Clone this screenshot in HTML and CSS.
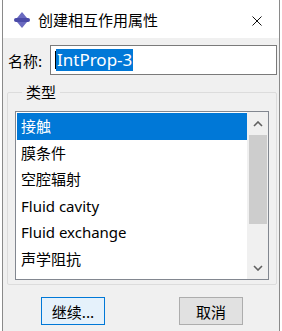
FILE: index.html
```html
<!DOCTYPE html>
<html lang="zh-CN">
<head>
  <meta charset="UTF-8">
  <meta name="viewport" content="width=device-width, initial-scale=1.0">
  <title>创建相互作用属性</title>
  <link rel="stylesheet" href="styles.css">
</head>
<body>
  <div class="ventana">
    <!-- Barra de titulo -->
    <div class="titulo">
      <svg class="icono" width="18" height="18" viewBox="0 0 18 18">
        <polygon points="9,1 14,7 4,7" fill="#6a6ac0"/>
        <rect x="1" y="7" width="16" height="4" rx="2" fill="#4a4aa8"/>
        <polygon points="4,11 14,11 9,17" fill="#6a6ac0"/>
      </svg>
      <span class="titulo-texto">创建相互作用属性</span>
      <svg class="cerrar" width="10" height="10" viewBox="0 0 10 10">
        <path d="M0.5 0.5 L9.5 9.5 M9.5 0.5 L0.5 9.5" stroke="#111" stroke-width="1" fill="none"/>
      </svg>
    </div>

    <div class="contenido">
      <div class="fila-nombre">
        <label class="etiqueta">名称:</label>
        <div class="campo">
          <span class="cursor"></span>
          <span class="seleccion">IntProp-3</span>
        </div>
      </div>

      <fieldset class="grupo">
        <legend>类型</legend>
        <div class="lista">
          <ul class="items">
            <li class="activo">接触</li>
            <li>膜条件</li>
            <li>空腔辐射</li>
            <li>Fluid cavity</li>
            <li>Fluid exchange</li>
            <li>声学阻抗</li>
          </ul>
          <div class="barra">
            <svg class="flecha" width="10" height="6" viewBox="0 0 10 6">
              <path d="M1 5 L5 1 L9 5" stroke="#606060" stroke-width="1.6" fill="none"/>
            </svg>
            <div class="pulgar"></div>
            <div class="resto"></div>
            <svg class="flecha" width="10" height="6" viewBox="0 0 10 6">
              <path d="M1 1 L5 5 L9 1" stroke="#606060" stroke-width="1.6" fill="none"/>
            </svg>
          </div>
        </div>
      </fieldset>

      <div class="botones">
        <button class="boton principal">继续...</button>
        <button class="boton">取消</button>
      </div>
    </div>
  </div>
</body>
</html>
```

FILE: styles.css
```css
body {
  margin: 0;
  padding: 0;
  background-color: #ffffff;
  font-family: "Segoe UI", "Noto Sans", "Noto Sans CJK SC", sans-serif;
  color: #000;
}

.ventana {
  margin-left: 2px;
  width: 276px;
  height: 331px;
  border-left: 1px solid #8a8a8a;
  border-right: 1px solid #8a8a8a;
  display: flex;
  flex-direction: column;
  background-color: #f0f0f0;
}

.titulo {
  height: 38px;
  background-color: #ffffff;
  display: flex;
  align-items: center;
  padding-left: 10px;
}

.icono {
  margin-top: 1px;
}

.titulo-texto {
  margin-left: 7px;
  font-size: 15px;
  font-family: "Noto Sans CJK SC", sans-serif;
}

.cerrar {
  margin-left: auto;
  margin-right: 17px;
  margin-top: 4px;
}

.contenido {
  flex: 1;
  display: flex;
  flex-direction: column;
}

.fila-nombre {
  display: flex;
  align-items: center;
  margin-top: 7px;
  padding-left: 5px;
  padding-right: 2px;
}

.etiqueta {
  font-size: 15px;
  font-family: "Noto Sans CJK SC", sans-serif;
  width: 42px;
}

.campo {
  flex: 1;
  height: 28px;
  border: 1px solid #7a7a7a;
  background-color: #ffffff;
  display: flex;
  align-items: center;
  padding-left: 4px;
}

.cursor {
  width: 1px;
  height: 18px;
  background-color: #000;
}

.seleccion {
  background-color: #0078d7;
  color: #ffffff;
  font-size: 17px;
  line-height: 22px;
  padding: 0 1px;
}

.grupo {
  margin: 8px 2px 0 4px;
  padding: 10px 7px 4px 7px;
  border: 1px solid #dcdcdc;
  border-radius: 2px;
}

.grupo legend {
  font-size: 15px;
  font-family: "Noto Sans CJK SC", sans-serif;
  padding: 0 4px;
  margin-left: 7px;
  line-height: 18px;
}

.lista {
  display: grid;
  grid-template-columns: 1fr 21px;
  border: 1px solid #828790;
  background-color: #ffffff;
  height: 169px;
  box-sizing: border-box;
}

.items {
  list-style: none;
  margin: 0;
  padding: 1px 0 0 1px;
}

.items li {
  height: 26.5px;
  line-height: 26px;
  padding-left: 4px;
  font-size: 15px;
}

.items li.activo {
  background-color: #0078d7;
  color: #ffffff;
}

.barra {
  background-color: #f0f0f0;
  display: flex;
  flex-direction: column;
  align-items: center;
  padding: 0 2px;
}

.flecha {
  margin: 9px 0 8px;
}

.pulgar {
  width: 18px;
  height: 89px;
  background-color: #cdcdcd;
}

.resto {
  flex: 1;
}

.botones {
  display: flex;
  justify-content: space-between;
  padding: 12px 36px 0 38px;
}

.boton {
  width: 64px;
  height: 28px;
  font-size: 15px;
  font-family: "Noto Sans CJK SC", sans-serif;
  background-color: #e1e1e1;
  border: 1px solid #adadad;
  padding: 0;
  color: #000;
}

.boton.principal {
  background-color: #e5f1fb;
  border: 1px solid #0078d7;
}
```
